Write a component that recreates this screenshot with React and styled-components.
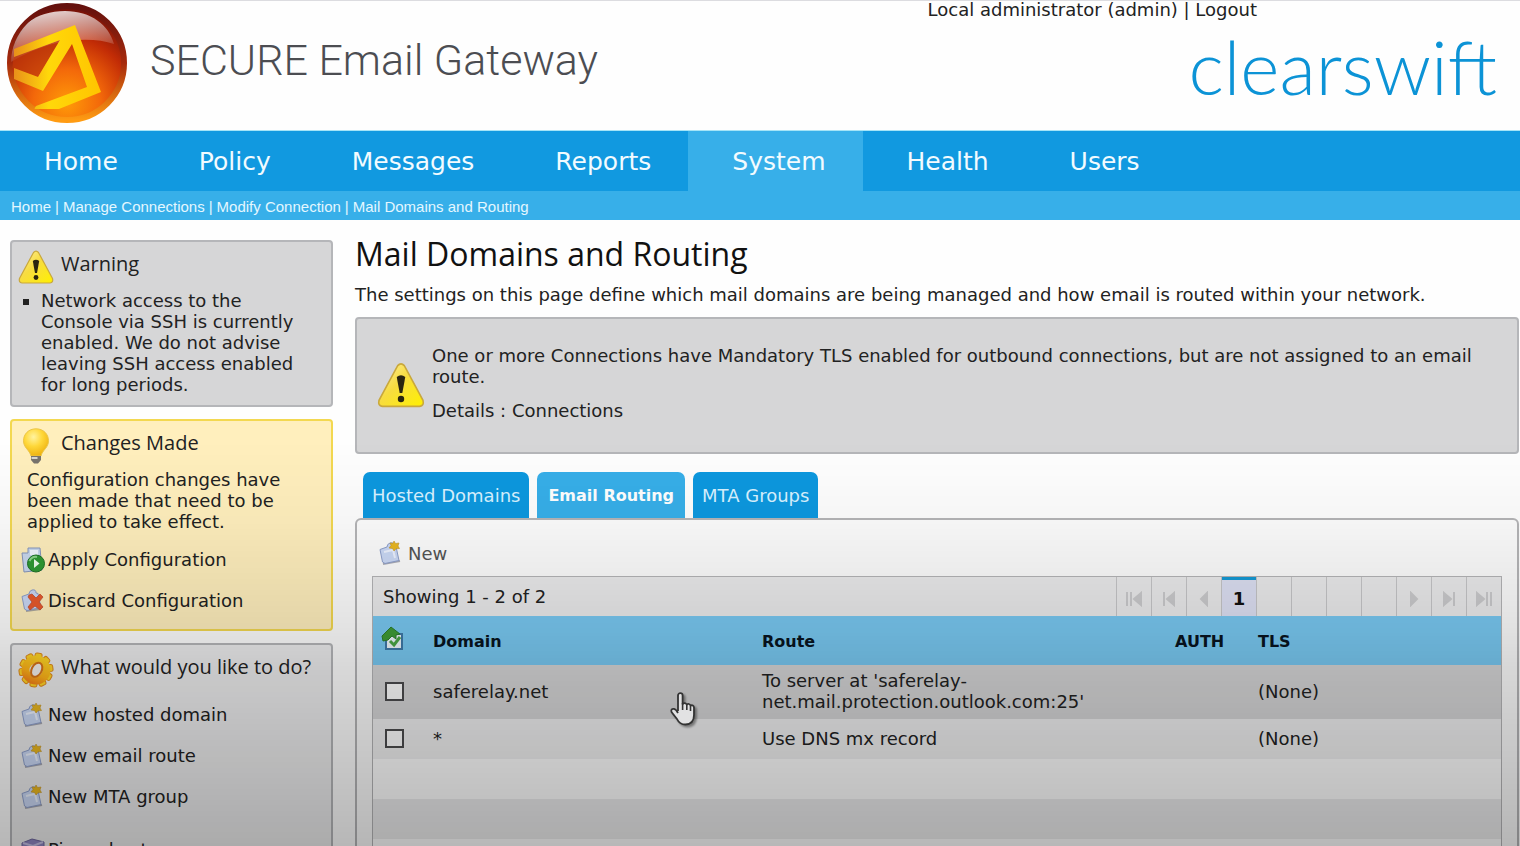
import React, { useState } from "react";
import styled, { createGlobalStyle } from "styled-components";

const GlobalStyle = createGlobalStyle`
  * {
    box-sizing: border-box;
  }
  body {
    margin: 0;
    background: #fefefe;
    color: #222;
    font-family: "DejaVu Sans", Verdana, sans-serif;
    font-size: 18px;
    line-height: 21px;
  }
  a {
    color: inherit;
    text-decoration: none;
  }
  button {
    padding: 0;
    border: 0;
    background: none;
    color: inherit;
    font: inherit;
    cursor: pointer;
  }
  svg {
    flex: none;
  }
`;

const Page = styled.div`
  height: 100vh;
  overflow: hidden;
`;

const Header = styled.header`
  display: flex;
  justify-content: space-between;
  height: 131px;
  border-top: 1px solid #dcdce0;
  border-bottom: 1px solid #a5e4f7;
`;
const Brand = styled.div`
  display: flex;
  align-items: center;
  gap: 22px;
  padding-left: 6px;
  padding-bottom: 6px;
`;
const ProductName = styled.h1`
  margin: 0 0 5px;
  color: #4c4d52;
  font: 300 43px/50px Roboto, sans-serif;
`;
const HeaderRight = styled.div`
  display: flex;
  flex-direction: column;
  align-items: flex-end;
  padding-right: 23px;
`;
const UserLine = styled.div`
  margin-right: 240px;
  line-height: 18px;
`;
const Company = styled.div`
  color: #0c93d6;
  font: 300 75px/94px Lato, sans-serif;
`;

const Nav = styled.nav`
  display: flex;
  height: 60px;
  background: #1199e0;
`;
const NavLink = styled.a`
  padding: 0 37px 0 44px;
  background: ${(props) => (props.$active ? "#37afe9" : "transparent")};
  color: #f2fbff;
  font-size: 25px;
  line-height: 62px;
`;
const Crumbs = styled.div`
  display: flex;
  gap: 4px;
  height: 29px;
  padding-left: 11px;
  background: #37afe9;
  color: #e4f7ff;
  font: 15px/31px "Liberation Sans", Arial, sans-serif;
`;

const Columns = styled.div`
  display: flex;
  align-items: flex-start;
  gap: 22px;
  padding: 20px 1px 0 10px;
`;
const Sidebar = styled.aside`
  display: flex;
  flex-direction: column;
  flex: none;
  gap: 12px;
  width: 323px;
`;

const boxColors = {
  grey: ["#d6d6d7", "#b5b6b9"],
  light: ["#ededee", "#b5b6b9"],
  yellow: ["#ffefbd", "#f3d850"],
};
const Box = styled.section`
  padding: 7px 6px 8px;
  background: ${(props) => boxColors[props.$tone || "grey"][0]};
  border: 2px solid ${(props) => boxColors[props.$tone || "grey"][1]};
  border-radius: 4px;
`;
const BoxTitle = styled.h2`
  display: flex;
  gap: 7px;
  height: 36px;
  margin: 0;
  font: 20px/30px "Open Sans", sans-serif;
  white-space: nowrap;
`;
const WarningList = styled.ul`
  margin: 5px 0 2px;
  padding-left: 23px;
  padding-right: 20px;
  list-style: square;
`;
const BoxText = styled.p`
  margin: 5px 0 7px;
  padding: 0 30px 0 9px;
`;
const Actions = styled.div`
  margin-top: ${(props) => (props.$spaced ? "12px" : "6px")};
`;
const ActionLink = styled.a`
  display: flex;
  align-items: center;
  gap: 3px;
  height: 41px;
  padding-left: 3px;
`;

const Main = styled.main`
  flex: 1;
  min-width: 0;
`;
const Title = styled.h2`
  margin: 0;
  color: #111;
  font: 32px/28px "Open Sans", sans-serif;
`;
const Intro = styled.p`
  margin: 16px 0 12px;
`;
const Alert = styled(Box)`
  display: flex;
  align-items: center;
  gap: 7px;
  min-height: 137px;
  padding: 0 40px 2px 20px;
`;
const AlertText = styled.p`
  margin: 0 0 13px;
`;
const AlertBody = styled.div`
  padding-bottom: 3px;
`;

const Tabs = styled.div`
  display: flex;
  gap: 8px;
  margin-top: 18px;
  padding-left: 8px;
`;
const Tab = styled.button`
  height: 46px;
  padding: ${(props) => (props.$active ? "0 11px" : "0 9px")};
  background: ${(props) => (props.$active ? "#37afe9" : "#0d98df")};
  border-radius: 7px 7px 0 0;
  color: ${(props) => (props.$active ? "#fff" : "#d8f2ff")};
  font-size: ${(props) => (props.$active ? "16px" : "18px")};
  font-weight: ${(props) => (props.$active ? "bold" : "normal")};
`;
const Panel = styled.div`
  padding: 14px 15px 60px;
  background: #fdfdfd;
  border: 2px solid #b5b5b7;
  border-radius: 6px;
`;
const NewButton = styled.button`
  display: flex;
  align-items: center;
  gap: 5px;
  height: 42px;
  padding: 0 0 4px 7px;
  color: #555;
`;
const Grid = styled.div`
  border: 1px solid #b5b5b7;
`;
const GridTop = styled.div`
  display: flex;
  align-items: center;
  justify-content: space-between;
  height: 39px;
  padding-left: 10px;
  background: #ebebec;
`;
const Pager = styled.div`
  display: flex;
  align-self: stretch;
`;
const PageButton = styled.button`
  display: flex;
  align-items: center;
  justify-content: center;
  width: 35px;
  padding-top: 4px;
  background: ${(props) => (props.$current ? "#dde0f3" : "transparent")};
  border-left: 1px solid #c6c6c8;
  box-shadow: ${(props) => (props.$current ? "inset 0 3px #159ad6" : "none")};
  color: ${(props) => (props.$current ? "#111" : "#cbcbcd")};
  font-weight: bold;
`;

const Table = styled.table`
  width: 100%;
  table-layout: fixed;
  border-collapse: collapse;
`;
const HeadCell = styled.th`
  width: ${(props) => props.$width};
  height: 49px;
  padding: 2px 0 0;
  background: #79c9f2;
  color: #081420;
  font-size: 16px;
  text-align: left;
`;
const Row = styled.tr`
  height: ${(props) => (props.$tall ? "54px" : "40px")};
  background: ${(props) => props.$shade};
`;
const Cell = styled.td`
  padding: 0 0 2px;
`;
const CheckCell = styled.div`
  display: flex;
  padding-left: ${(props) => (props.$icon ? "8px" : "12px")};
`;
const Check = styled.input`
  width: 19px;
  height: 19px;
  margin: 0;
  appearance: none;
  background: #fff;
  border: 2px solid #4c4c4e;
  &:checked {
    background: #37afe9;
  }
`;

const Scrim = styled.div`
  position: fixed;
  inset: 52vh 0 0;
  background: linear-gradient(
    rgba(0, 0, 0, 0),
    rgba(0, 0, 0, 0.03) 20%,
    rgba(0, 0, 0, 0.11) 47%,
    rgba(0, 0, 0, 0.15) 56%,
    rgba(0, 0, 0, 0.28)
  );
  pointer-events: none;
`;
const Pointer = styled.svg`
  position: fixed;
  left: 669px;
  top: 691px;
  filter: drop-shadow(2px 2px 1px rgba(0, 0, 0, 0.4));
  pointer-events: none;
`;

const LogoIcon = () => (
  <svg width="122" height="122" viewBox="0 0 122 122" aria-hidden="true">
    <defs>
      <radialGradient id="ball" cx="50%" cy="85%" r="85%">
        <stop offset="0" stopColor="#ff9a08" />
        <stop offset="0.35" stopColor="#f3680a" />
        <stop offset="0.68" stopColor="#c22c06" />
        <stop offset="1" stopColor="#6c0d08" />
      </radialGradient>
      <linearGradient id="shine" x1="0.2" y1="0" x2="0.5" y2="1">
        <stop offset="0" stopColor="#fff" stopOpacity="0.85" />
        <stop offset="1" stopColor="#fff" stopOpacity="0" />
      </linearGradient>
      <linearGradient id="rim" x1="0" y1="0" x2="0" y2="1">
        <stop offset="0" stopColor="#64100d" />
        <stop offset="0.5" stopColor="#a62a0c" />
        <stop offset="1" stopColor="#ff9b12" />
      </linearGradient>
      <linearGradient id="arrow" x1="0" y1="0" x2="1" y2="0">
        <stop offset="0" stopColor="#e9901a" />
        <stop offset="0.4" stopColor="#ffd80a" />
        <stop offset="1" stopColor="#ffc400" />
      </linearGradient>
      <clipPath id="ballClip">
        <circle cx="61" cy="61" r="56" />
      </clipPath>
    </defs>
    <circle cx="61" cy="61" r="57" fill="url(#ball)" stroke="url(#rim)" strokeWidth="6" />
    <g clipPath="url(#ballClip)">
      <path d="M5 60C3 28 28 9 59 9c26 0 44 14 49 33C84 34 44 36 5 60Z" fill="url(#shine)" />
      <path d="M8 54 54 38 32 75 6 66Z" fill="#b93a0c" opacity="0.6" />
      <path
        d="M8 47 69 23 95 90 53 107 28 107 30 104 81 85 66 42 37 89 8 77V66l24 9 22-37L8 55Z"
        fill="url(#arrow)"
      />
    </g>
  </svg>
);

const WarningIcon = ({ size }) => (
  <svg width={size} height={size} viewBox="0 0 36 36" aria-hidden="true">
    <defs>
      <linearGradient id="warn" x1="0" y1="0" x2="1" y2="1">
        <stop offset="0" stopColor="#fff0a0" />
        <stop offset="0.45" stopColor="#f7dc40" />
        <stop offset="1" stopColor="#fff000" />
      </linearGradient>
    </defs>
    <path
      d="M15.5 3.5Q18 .8 20.5 3.5L34.5 29.500Q35.500 33.500 32 34H4Q.5 33.500 1.500 29.500Z"
      fill="url(#warn)"
      stroke="#c9a83c"
      strokeWidth="1.200"
    />
    <path d="M14.800 12q3.200-2.500 6.400 0L19 24h-2Z" fill="#2a2410" />
    <circle cx="18" cy="28.500" r="2.400" fill="#2a2410" />
  </svg>
);

const BulbIcon = () => (
  <svg width="36" height="36" viewBox="0 0 36 36" aria-hidden="true">
    <defs>
      <radialGradient id="bulb" cx="40%" cy="30%" r="70%">
        <stop offset="0" stopColor="#fff3a0" />
        <stop offset="0.5" stopColor="#ffd83a" />
        <stop offset="1" stopColor="#f0b412" />
      </radialGradient>
    </defs>
    <path
      d="M18 .8c7.500 0 12.500 5.400 12.500 12 0 7-6 9-7.500 15.200H13C11.500 21.800 5.500 19.800 5.500 12.800 5.500 6.200 10.500.8 18 .8Z"
      fill="url(#bulb)"
      stroke="#ecc648"
    />
    <path d="M13 28h10v4l-3 3.500h-4L13 32Z" fill="#77736c" />
    <path d="M13.500 30h6" stroke="#d8d5cf" strokeWidth="2" />
  </svg>
);

const teeth = [0, 36, 72, 108, 144, 180, 216, 252, 288, 324];

const GearIcon = () => (
  <svg width="36" height="36" viewBox="0 0 36 36" aria-hidden="true">
    <defs>
      <linearGradient id="gear" gradientUnits="userSpaceOnUse" x1="24" y1="2" x2="10" y2="34">
        <stop offset="0" stopColor="#ffdc28" />
        <stop offset="0.6" stopColor="#ffb218" />
        <stop offset="1" stopColor="#f0701c" />
      </linearGradient>
    </defs>
    <g stroke="#e08a1c">
      {teeth.map((angle) => (
        <rect
          key={angle}
          x="14.500"
          y="1"
          width="7"
          height="8"
          rx="2"
          fill="url(#gear)"
          transform={`rotate(${angle + 10} 18 18)`}
        />
      ))}
    </g>
    <circle cx="18" cy="18" r="10.500" fill="none" stroke="url(#gear)" strokeWidth="8" />
    <ellipse
      cx="18.500"
      cy="17.500"
      rx="5"
      ry="7.500"
      fill="#f4f0ec"
      stroke="#d6741a"
      strokeWidth="2"
      transform="rotate(28 18 18)"
    />
  </svg>
);

const Note = () => (
  <path
    d="M2 9.500 9 7q0-3 3-4 4-1 4 3l2 .5 3 14L7 23.500 4.500 22Z"
    fill="#cbd9f6"
    stroke="#8ea0cc"
    strokeLinejoin="round"
  />
);

const NewIcon = () => (
  <svg width="24" height="26" viewBox="1 0 24 26" aria-hidden="true">
    <path d="M5 24 22 21" stroke="#77798a" strokeWidth="2" opacity="0.6" />
    <Note />
    <path d="m6 12 9-2 2 8" fill="none" stroke="#edf3ff" strokeWidth="2" />
    <path
      d="m16 1 1.500 2.500L21 3l-1 3 1.500 2.500-3.500.3L16 11l-1.500-2.500L11 8l2-2.500L12 3l3 .3Z"
      fill="#eab820"
      stroke="#c4952a"
      strokeWidth="0.600"
    />
  </svg>
);

const ApplyIcon = () => (
  <svg width="24" height="26" viewBox="0 0 24 26" aria-hidden="true">
    <path d="M1 6h6V1h12l2 22-18 2Z" fill="#c9d8ef" stroke="#8797bd" />
    <path d="M9 3h8v5H9Z" fill="#f3f7ff" />
    <circle cx="15" cy="16.500" r="8.500" fill="#2f9a34" stroke="#1d7226" />
    <path d="M8.500 14Q11 9 16 10" fill="none" stroke="#8cd58b" strokeWidth="2" />
    <path d="m13 12 5.500 4.500L13 21Z" fill="#f2fff0" />
  </svg>
);

const DiscardIcon = () => (
  <svg width="24" height="26" viewBox="1 1 24 26" aria-hidden="true">
    <path d="M6 24 21 22" stroke="#77798a" strokeWidth="2" opacity="0.6" />
    <Note />
    <path
      d="m9 8 3-1 4 4 4-4 3 3-4 5 4 5-3 3-5-4-5 4-2-3 4-5-4-5Z"
      fill="#ea5b2c"
      stroke="#c44f35"
      strokeWidth="0.800"
    />
  </svg>
);

const PingIcon = () => (
  <svg width="24" height="26" viewBox="0 0 24 26" aria-hidden="true">
    <path d="M1 6 11 2l12 3v14l-11 5L1 20Z" fill="#8f86c2" stroke="#6d669c" />
    <path d="m2 6 10 3 10-4" fill="none" stroke="#c5c0e4" strokeWidth="2" />
  </svg>
);

const SelectAllIcon = () => (
  <svg width="24" height="26" viewBox="0 0 24 26" aria-hidden="true">
    <path d="M5 8h16v15H5Z" fill="#eef6fb" stroke="#3f79a8" strokeWidth="2" />
    <path d="M1 10 10 1l9 7-4 1v4l-4-3-4 4-5 1Z" fill="#3f9c36" stroke="#2c7e2c" />
    <path d="m9 15 4 4 6-8" fill="none" stroke="#4aa545" strokeWidth="3" />
  </svg>
);

const pagerPaths = {
  start: "M2 1v14M6 1v14M16 2 9 8l7 6Z",
  prevBlock: "M4 1v14M14 2 7 8l7 6Z",
  prev: "M12 2 6 8l6 6Z",
  next: "M6 2l6 6-6 6Z",
  nextBlock: "M4 2l7 6-7 6ZM14 1v14",
  end: "M2 2l7 6-7 6ZM12 1v14M16 1v14",
};

const PagerIcon = ({ name }) => (
  <svg width="18" height="16" viewBox="0 0 18 16" aria-hidden="true">
    <path d={pagerPaths[name]} fill="currentColor" stroke="currentColor" strokeWidth="2" />
  </svg>
);

const navItems = ["Home", "Policy", "Messages", "Reports", "System", "Health", "Users"];
const tabs = ["Hosted Domains", "Email Routing", "MTA Groups"];
const pages = ["start", "prevBlock", "prev", "1", "", "", "", "", "next", "nextBlock", "end"];
const routes = [
  {
    domain: "saferelay.net",
    route: "To server at 'saferelay-net.mail.protection.outlook.com:25'",
    tls: "(None)",
    shade: "#d6d6d7",
  },
  { domain: "*", route: "Use DNS mx record", tls: "(None)", shade: "#f1f1f2" },
];
const emptyRows = ["#fff", "#ededee", "#fff", "#ededee"];

const App = () => {
  const [tab, setTab] = useState("Email Routing");

  return (
    <Page>
      <GlobalStyle />
      <Header>
        <Brand>
          <LogoIcon />
          <ProductName>SECURE Email Gateway</ProductName>
        </Brand>
        <HeaderRight>
          <UserLine>
            Local administrator (admin) | <a href="#logout">Logout</a>
          </UserLine>
          <Company>clearswift</Company>
        </HeaderRight>
      </Header>
      <Nav>
        {navItems.map((item) => (
          <NavLink key={item} href={`#${item}`} $active={item === "System"}>
            {item}
          </NavLink>
        ))}
      </Nav>
      <Crumbs>
        <a href="#home">Home</a>|<a href="#connections">Manage Connections</a>|
        <a href="#modify">Modify Connection</a>|
        <a href="#routing">Mail Domains and Routing</a>
      </Crumbs>
      <Columns>
        <Sidebar>
          <Box>
            <BoxTitle>
              <WarningIcon size={36} />
              Warning
            </BoxTitle>
            <WarningList>
              <li>
                Network access to the Console via SSH is currently enabled. We
                do not advise leaving SSH access enabled for long periods.
              </li>
            </WarningList>
          </Box>
          <Box $tone="yellow">
            <BoxTitle>
              <BulbIcon />
              Changes Made
            </BoxTitle>
            <BoxText>
              Configuration changes have been made that need to be applied to
              take effect.
            </BoxText>
            <ActionLink href="#apply">
              <ApplyIcon />
              Apply Configuration
            </ActionLink>
            <ActionLink href="#discard">
              <DiscardIcon />
              Discard Configuration
            </ActionLink>
          </Box>
          <Box $tone="light">
            <BoxTitle>
              <GearIcon />
              What would you like to do?
            </BoxTitle>
            <Actions>
              <ActionLink href="#new-domain">
                <NewIcon />
                New hosted domain
              </ActionLink>
              <ActionLink href="#new-route">
                <NewIcon />
                New email route
              </ActionLink>
              <ActionLink href="#new-group">
                <NewIcon />
                New MTA group
              </ActionLink>
            </Actions>
            <Actions $spaced>
              <ActionLink href="#ping">
                <PingIcon />
                Ping a host
              </ActionLink>
            </Actions>
          </Box>
        </Sidebar>
        <Main>
          <Title>Mail Domains and Routing</Title>
          <Intro>
            The settings on this page define which mail domains are being
            managed and how email is routed within your network.
          </Intro>
          <Alert>
            <WarningIcon size={48} />
            <AlertBody>
              <AlertText>
                One or more Connections have Mandatory TLS enabled for outbound
                connections, but are not assigned to an email route.
              </AlertText>
              <div>
                Details : <a href="#connections">Connections</a>
              </div>
            </AlertBody>
          </Alert>
          <Tabs role="tablist">
            {tabs.map((name) => (
              <Tab
                key={name}
                role="tab"
                aria-selected={name === tab}
                $active={name === tab}
                onClick={() => setTab(name)}
              >
                {name}
              </Tab>
            ))}
          </Tabs>
          <Panel>
            <NewButton>
              <NewIcon />
              New
            </NewButton>
            <Grid>
              <GridTop>
                <span>Showing 1 - 2 of 2</span>
                <Pager>
                  {pages.map((page, index) => (
                    <PageButton key={index} $current={page === "1"} aria-label={page || "page"}>
                      {pagerPaths[page] ? <PagerIcon name={page} /> : page}
                    </PageButton>
                  ))}
                </Pager>
              </GridTop>
              <Table>
                <thead>
                  <tr>
                    <HeadCell $width="60px">
                      <CheckCell $icon>
                        <button aria-label="Select all">
                          <SelectAllIcon />
                        </button>
                      </CheckCell>
                    </HeadCell>
                    <HeadCell $width="329px">Domain</HeadCell>
                    <HeadCell>Route</HeadCell>
                    <HeadCell $width="83px">AUTH</HeadCell>
                    <HeadCell $width="243px">TLS</HeadCell>
                  </tr>
                </thead>
                <tbody>
                  {routes.map((item, index) => (
                    <Row key={item.domain} $tall={index === 0} $shade={item.shade}>
                      <Cell>
                        <CheckCell>
                          <Check type="checkbox" aria-label={item.domain} />
                        </CheckCell>
                      </Cell>
                      <Cell>{item.domain}</Cell>
                      <Cell>{item.route}</Cell>
                      <Cell />
                      <Cell>{item.tls}</Cell>
                    </Row>
                  ))}
                  {emptyRows.map((shade, index) => (
                    <Row key={index} $shade={shade}>
                      <Cell colSpan={5} />
                    </Row>
                  ))}
                </tbody>
              </Table>
            </Grid>
          </Panel>
        </Main>
      </Columns>
      <Scrim />
      <Pointer width="28" height="36" viewBox="0 0 28 36" aria-hidden="true">
        <path
          d="M9 20V4.500a2.300 2.300 0 0 1 4.600 0V13q2.200-2 4.200.5 2.300-1.500 3.700 1 3-1 3.500 2v7.500q0 9-8.500 9.500-6 0-8.500-5.500L2.500 21q-1-3.500 2.500-3.200 2 .4 4 4.200"
          fill="#e2e2e3"
          stroke="#333"
          strokeWidth="1.800"
          strokeLinejoin="round"
        />
        <path d="M13.600 12v7M17.800 14v5M21.500 15v5" stroke="#333" strokeWidth="1.600" />
      </Pointer>
    </Page>
  );
};

export default App;
